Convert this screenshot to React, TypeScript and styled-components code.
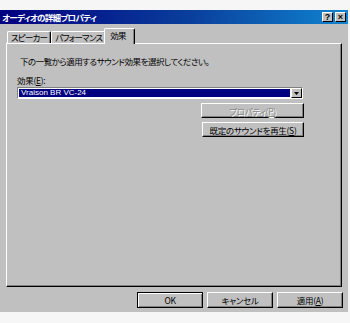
import React from 'react';
import styled, { createGlobalStyle } from 'styled-components';

const GlobalStyle = createGlobalStyle`
  html, body { margin: 0; padding: 0; background: #f6f6f6; }
  body {
    font-family: "Noto Sans CJK JP", "Liberation Sans", sans-serif;
    font-size: 9px;
    font-feature-settings: "palt";
    color: #000;
  }
`;

const Page = styled.div`
  width: 350px; height: 323px; padding-top: 10px; box-sizing: border-box;
`;

const Window = styled.div`
  width: 348px; height: 302px; background: #c0c0c0;
  display: flex; flex-direction: column;
`;

const TitleBar = styled.div`
  height: 14px; display: flex; align-items: center; justify-content: space-between;
  padding: 0 2px 0 2px;
  background: linear-gradient(90deg, #000080 0%, #0a3f9c 55%, #1084d0 100%);
  color: #fff;
  .caption { font-weight: bold; font-size: 8.5px; line-height: 14px; letter-spacing: -0.7px; }
  .btns { display: flex; gap: 2px; }
`;

const CapButton = styled.div`
  width: 11px; height: 10px; box-sizing: border-box; background: #c0c0c0; color: #000;
  border-top: 1px solid #fff; border-left: 1px solid #fff;
  border-right: 1px solid #000; border-bottom: 1px solid #000;
  font: bold 9px/8px "Liberation Sans", sans-serif; text-align: center;
`;

const TabRow = styled.div`
  display: flex; align-items: flex-end; height: 15px; margin: 4px 0 0 7px;
  position: relative; z-index: 1;
`;

const Tab = styled.div<{ $active?: boolean }>`
  height: ${p => (p.$active ? '16px' : '12px')};
  margin: ${p => (p.$active ? '0 -1px -1px -2px' : '0')};
  padding: ${p => (p.$active ? '0 8px 0 5px' : '0 3px')};
  box-sizing: border-box; background: #c0c0c0;
  border-top: 1px solid #fff; border-left: 1px solid #fff;
  border-right: 1px solid #000; border-radius: 2px 2px 0 0;
  box-shadow: inset -1px 0 0 #808080;
  font-size: 8.5px; line-height: ${p => (p.$active ? '13px' : '11px')};
  letter-spacing: -0.8px;
  white-space: nowrap;
`;

const Panel = styled.div`
  height: 244px; margin: 0 6px 0 6px; box-sizing: border-box;
  border-top: 1px solid #fff; border-left: 1px solid #fff;
  border-right: 1px solid #000; border-bottom: 1px solid #000;
  box-shadow: inset -1px -1px 0 #808080;
  padding: 11px 0 0 10px;
  display: flex; flex-direction: column; width: 336px;
`;

const Instruction = styled.div`
  margin-left: 3px; line-height: 12px; height: 12px; letter-spacing: -0.5px;
  font-size: 8.5px; white-space: nowrap;
`;

const Label = styled.div`
  margin-top: 7px; line-height: 12px; height: 12px; font-size: 8.5px; letter-spacing: -0.3px;
  u { text-decoration: underline; }
`;

const Combo = styled.div`
  width: 286px; height: 12px; box-sizing: border-box; margin-top: 1px;
  border-top: 1px solid #808080; border-left: 1px solid #808080;
  border-right: 1px solid #fff; border-bottom: 1px solid #fff;
  display: flex; background: #fff;
  .value {
    flex: 1; background: #000080; color: #fff; margin: 1px;
    font: 8px/8px "Liberation Sans", sans-serif; padding-left: 2px;
  }
`;

const Arrow = styled.div`
  width: 11px; box-sizing: border-box; background: #c0c0c0;
  border-top: 1px solid #fff; border-left: 1px solid #fff;
  border-right: 1px solid #000; border-bottom: 1px solid #000;
  display: flex; align-items: center; justify-content: center;
`;

const SideButtons = styled.div`
  width: 287px; display: flex; flex-direction: column; align-items: flex-end;
  gap: 4px; margin-top: 4px;
`;

const Button = styled.div<{ $w?: number; $disabled?: boolean; $default?: boolean }>`
  width: ${p => p.$w ?? 66}px; height: 15px; box-sizing: border-box; background: #c0c0c0;
  border-top: 1px solid ${p => (p.$default ? '#000' : '#fff')};
  border-left: 1px solid ${p => (p.$default ? '#000' : '#fff')};
  border-right: 1px solid #000; border-bottom: 1px solid #000;
  box-shadow: ${p => (p.$default ? 'inset 1px 1px 0 #fff, inset -1px -1px 0 #808080' : 'inset -1px -1px 0 #808080')};
  display: flex; align-items: center; justify-content: center;
  font-size: 8.5px; line-height: 12px; letter-spacing: -0.3px; white-space: nowrap;
  color: ${p => (p.$disabled ? '#8a8a8a' : '#000')};
  text-shadow: ${p => (p.$disabled ? '1px 1px 0 #fff' : 'none')};
  u { text-decoration: underline; }
`;

const Footer = styled.div`
  display: flex; justify-content: flex-end; gap: 4px; margin: 5px 5px 0 0;
  ${Button} { height: 16px; }
`;

export default function App() {
  return (
    <Page>
      <GlobalStyle />
      <Window>
        <TitleBar>
          <span className="caption">オーディオの詳細プロパティ</span>
          <div className="btns">
            <CapButton>?</CapButton>
            <CapButton>×</CapButton>
          </div>
        </TitleBar>
        <TabRow>
          <Tab>スピーカー</Tab>
          <Tab>パフォーマンス</Tab>
          <Tab $active>効果</Tab>
        </TabRow>
        <Panel>
          <Instruction>下の一覧から適用するサウンド効果を選択してください。</Instruction>
          <Label>効果(<u>E</u>):</Label>
          <Combo>
            <div className="value">Vraison BR VC-24</div>
            <Arrow>
              <svg width="5" height="3" viewBox="0 0 5 3"><path d="M0 0h5L2.5 3z" fill="#000" /></svg>
            </Arrow>
          </Combo>
          <SideButtons>
            <Button $w={103} $disabled>プロパティ(<u>P</u>)</Button>
            <Button $w={102}>既定のサウンドを再生(<u>S</u>)</Button>
          </SideButtons>
        </Panel>
        <Footer>
          <Button $default>OK</Button>
          <Button>キャンセル</Button>
          <Button>適用(<u>A</u>)</Button>
        </Footer>
      </Window>
    </Page>
  );
}
